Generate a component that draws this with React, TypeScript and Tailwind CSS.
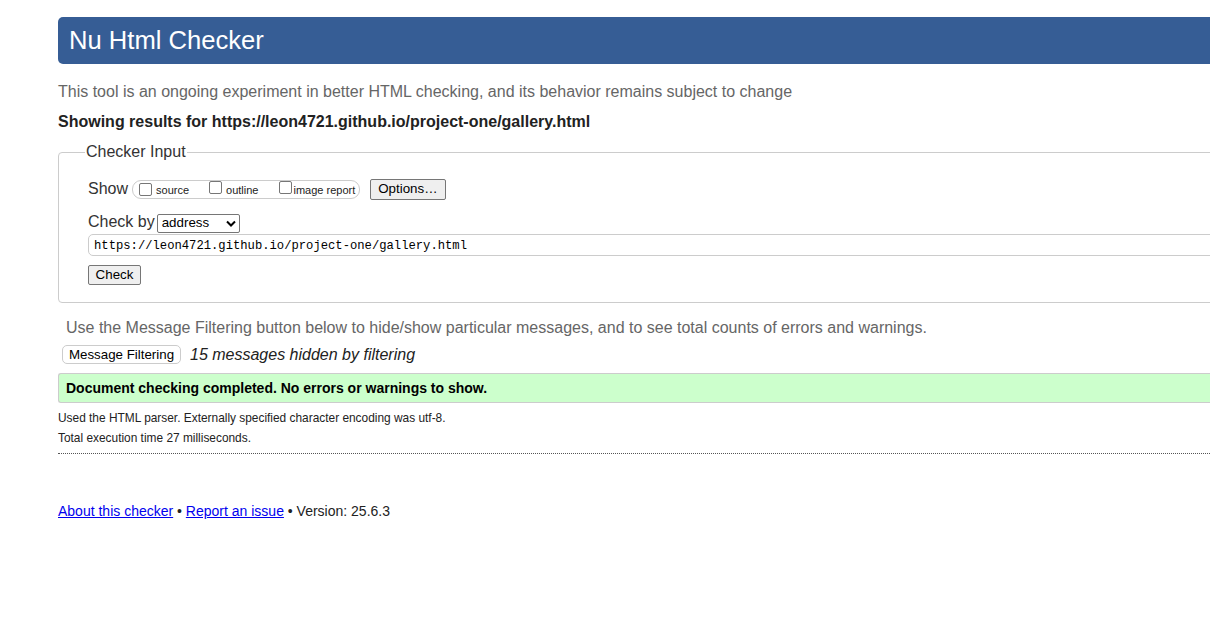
import React from "react";

function Box() {
  return (
    <span className="inline-block w-[13px] h-[13px] border border-[#767676] rounded-[2px] bg-white shrink-0" />
  );
}

export default function App() {
  return (
    <div className="w-[1210px] h-[619px] overflow-hidden bg-white font-['Liberation_Sans',Arial,sans-serif] text-[#222]">
      <div className="ml-[58px] w-[1300px] pt-[17px]">
        {/* Header */}
        <div className="h-[47px] bg-[#365d95] rounded-[5px] pl-[11px] flex items-center">
          <h1 className="text-white text-[25.6px] leading-none">Nu Html Checker</h1>
        </div>

        <p className="mt-[19px] h-[18px] leading-[18px] text-[16px] text-[#666]">
          This tool is an ongoing experiment in better HTML checking, and its behavior remains subject to change
        </p>
        <p className="mt-[12px] h-[18px] leading-[18px] text-[16px] font-bold text-[#222]">
          Showing results for https://leon4721.github.io/project-one/gallery.html
        </p>

        {/* Fieldset */}
        <fieldset className="mt-[12px] border border-[#ccc] rounded-[4px] pl-[26px] pb-[16px]">
          <legend className="px-[1px] text-[16px] leading-[18px] text-[#333]">Checker Input</legend>
          <div className="pl-[3px]">
            <div className="mt-[17px] h-[22px] flex items-center">
              <span className="text-[16px] text-[#333]">Show</span>
              <div className="ml-[4px] h-[19px] border border-[#ccc] rounded-[9px] pl-[6px] pr-[4px] flex items-center">
                <Box />
                <span className="ml-[4px] text-[11px] mt-[3px]">source</span>
                <span className="ml-[20px]"><Box /></span>
                <span className="ml-[4px] text-[11px] mt-[3px]">outline</span>
                <span className="ml-[21px]"><Box /></span>
                <span className="ml-[1px] text-[11px] mt-[3px]">image report</span>
              </div>
              <button className="ml-[10px] h-[21px] px-[7px] bg-[#efefef] border border-[#767676] rounded-[2px] text-[13.33px] text-black leading-none">
                Options…
              </button>
            </div>

            <div className="mt-[12px] h-[20px] flex items-center">
              <span className="text-[16px] text-[#333]">Check by</span>
              <div className="ml-[2px] mt-[2px] w-[83px] h-[19px] border border-[#767676] rounded-[2px] bg-white flex items-center pl-[4px] pr-[3px] justify-between">
                <span className="text-[13.33px] text-black leading-none">address</span>
                <svg width="10" height="7" viewBox="0 0 10 7">
                  <path d="M1 1.5 L5 5.5 L9 1.5" fill="none" stroke="#000" strokeWidth="2" />
                </svg>
              </div>
            </div>

            <div className="mt-[2px] h-[22px] border border-[#ccc] rounded-[5px] flex items-center pl-[5px]">
              <span className="mt-[2px] leading-none font-['Liberation_Mono','DejaVu_Sans_Mono',monospace] text-[12.2px] text-black">
                https://leon4721.github.io/project-one/gallery.html
              </span>
            </div>

            <button className="mt-[9px] h-[20px] w-[53px] bg-[#efefef] border border-[#767676] rounded-[2px] text-[13.33px] text-black leading-none">
              Check
            </button>
          </div>
        </fieldset>

        <p className="mt-[16px] ml-[8px] h-[18px] leading-[18px] text-[16px] text-[#666]">
          Use the Message Filtering button below to hide/show particular messages, and to see total counts of errors and warnings.
        </p>

        <div className="mt-[8px] h-[19px] flex items-center">
          <button className="ml-[4px] h-[19px] w-[119px] border border-[#ccc] rounded-[5px] bg-white text-[13.33px] text-black leading-none">
            Message Filtering
          </button>
          <span className="ml-[9px] text-[16px] italic text-[#222]">15 messages hidden by filtering</span>
        </div>

        <div className="mt-[9px] h-[30px] bg-[#ccffcc] border border-[#ccc] border-r-0 rounded-l-[3px] flex items-center pl-[7px]">
          <span className="text-[14px] font-bold text-black">
            Document checking completed. No errors or warnings to show.
          </span>
        </div>

        <p className="mt-[7px] h-[16px] leading-[16px] text-[11.9px] text-[#222]">
          Used the HTML parser. Externally specified character encoding was utf-8.
        </p>
        <p className="mt-[4px] h-[16px] leading-[16px] text-[11.9px] text-[#222]">
          Total execution time 27 milliseconds.
        </p>
        <div className="mt-[7px] border-t border-dotted border-[#555]" />

        <p className="mt-[49px] h-[16px] leading-[16px] text-[14px] text-[#222]">
          <a href="#" className="text-[#0000ee] underline">About this checker</a>
          {" • "}
          <a href="#" className="text-[#0000ee] underline">Report an issue</a>
          {" • Version: 25.6.3"}
        </p>
      </div>
    </div>
  );
}
